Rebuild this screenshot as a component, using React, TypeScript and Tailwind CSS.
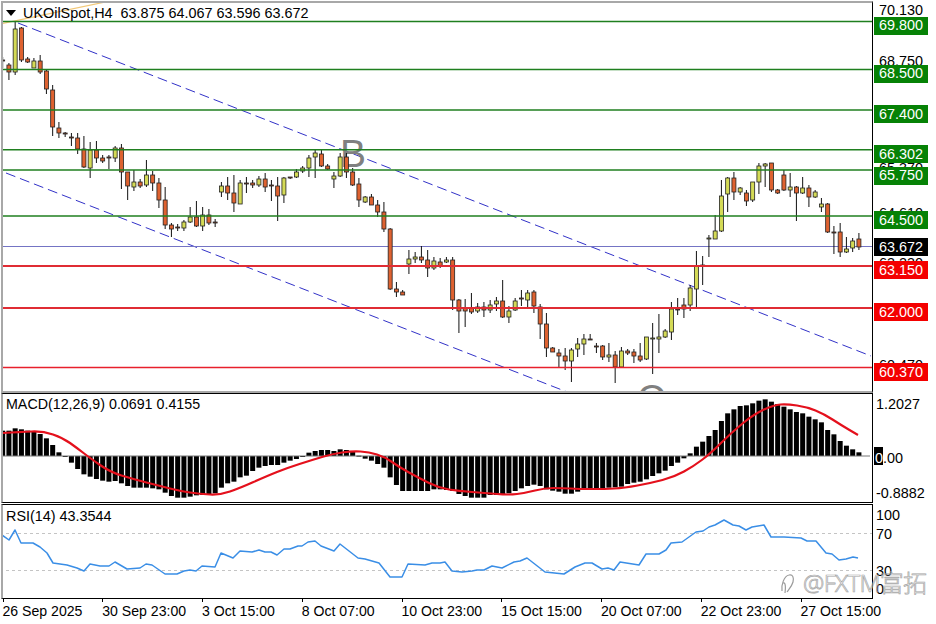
// MT4 style chart: UKOilSpot H4 with MACD and RSI panes
// all y values below are page pixels, read off the chart
type Candle = [number, number, number, number, number]; // high, low, bodyTop, bodyBottom, up

const CANDLES: Candle[] = [
  [57, 68, 60, 61, 0], [63, 80, 65, 72, 0], [22, 75, 29, 72, 1], [27, 62, 28, 60, 0], [57, 63, 59, 62, 0],
  [58, 68, 61, 68, 1], [55, 74, 61, 72, 0], [69, 94, 71, 89, 0], [85, 136, 90, 127, 0], [122, 138, 128, 133, 0],
  [132, 137, 133, 134, 0], [133, 146, 137, 138, 0], [133, 154, 138, 149, 0], [136, 168, 149, 167, 0], [142, 178, 150, 168, 1],
  [141, 163, 150, 158, 0], [155, 163, 158, 161, 0], [155, 169, 157, 158, 0], [146, 162, 148, 158, 1], [144, 189, 148, 172, 0],
  [172, 200, 172, 186, 0], [170, 191, 182, 187, 1], [179, 188, 182, 186, 0], [160, 187, 175, 185, 1], [171, 191, 175, 183, 0],
  [178, 208, 183, 200, 0], [187, 229, 200, 225, 0], [223, 237, 225, 229, 0], [224, 231, 227, 228, 0], [220, 231, 222, 228, 1],
  [207, 223, 217, 222, 1], [201, 227, 217, 226, 0], [207, 231, 215, 226, 1], [209, 225, 215, 223, 0], [219, 227, 222, 223, 0],
  [182, 197, 186, 192, 1], [177, 200, 186, 193, 0], [175, 212, 193, 203, 0], [180, 204, 183, 204, 1], [177, 193, 183, 184, 0],
  [180, 188, 183, 185, 0], [176, 187, 179, 185, 1], [173, 192, 179, 187, 0], [180, 201, 185, 186, 0], [177, 221, 186, 196, 0],
  [177, 203, 178, 195, 1], [177, 179, 177, 178, 0], [169, 178, 172, 177, 1], [166, 173, 168, 171, 1], [155, 177, 158, 168, 1],
  [150, 178, 153, 157, 1], [150, 167, 154, 166, 0], [164, 170, 166, 169, 0], [172, 188, 176, 179, 1], [153, 177, 157, 176, 1],
  [153, 178, 157, 172, 0], [168, 186, 172, 185, 0], [178, 207, 184, 200, 0], [196, 203, 197, 202, 1], [194, 205, 197, 205, 0],
  [200, 217, 205, 212, 0], [202, 232, 212, 229, 0], [228, 290, 229, 289, 0], [282, 297, 289, 292, 0], [290, 295, 292, 295, 0],
  [250, 274, 259, 264, 1], [252, 263, 257, 259, 1], [246, 263, 257, 260, 0], [250, 277, 260, 268, 0], [257, 270, 261, 268, 1],
  [258, 268, 262, 266, 0], [257, 263, 260, 262, 1], [257, 310, 260, 300, 0], [299, 333, 300, 311, 0], [299, 327, 308, 311, 0],
  [293, 314, 308, 312, 0], [303, 313, 307, 311, 1], [302, 317, 307, 310, 0], [300, 313, 305, 310, 1], [297, 311, 301, 304, 1],
  [280, 318, 301, 317, 0], [306, 323, 311, 317, 1], [298, 311, 301, 310, 1], [290, 306, 298, 299, 0], [290, 307, 293, 300, 1],
  [290, 313, 292, 306, 0], [304, 339, 307, 324, 0], [313, 357, 324, 348, 0], [347, 352, 348, 352, 0], [349, 367, 353, 356, 0],
  [348, 370, 356, 361, 0], [348, 382, 350, 361, 1], [338, 357, 344, 349, 1], [334, 355, 339, 344, 1], [334, 340, 339, 340, 0],
  [343, 353, 346, 347, 0], [345, 360, 346, 357, 0], [343, 362, 355, 357, 1], [351, 383, 355, 367, 0], [347, 367, 351, 367, 1],
  [349, 355, 351, 353, 0], [349, 363, 352, 356, 0], [343, 362, 356, 360, 0], [337, 360, 337, 359, 1], [323, 374, 338, 339, 1],
  [314, 353, 337, 339, 1], [329, 338, 331, 337, 1], [302, 340, 309, 332, 1], [298, 315, 309, 310, 0], [298, 318, 305, 309, 0],
  [285, 311, 288, 305, 1], [251, 307, 266, 289, 1], [256, 285, 265, 266, 1], [235, 257, 238, 239, 1], [215, 239, 231, 239, 1],
  [180, 232, 196, 231, 1], [177, 212, 178, 194, 1], [172, 200, 178, 192, 0], [187, 195, 188, 192, 1], [190, 206, 193, 201, 0],
  [182, 202, 182, 200, 1], [163, 194, 166, 182, 1], [163, 187, 164, 166, 1], [163, 192, 163, 190, 0], [189, 194, 190, 193, 0],
  [170, 191, 175, 190, 0], [173, 197, 187, 190, 1], [186, 221, 187, 193, 0], [177, 194, 188, 193, 1], [185, 207, 188, 197, 0],
  [190, 198, 192, 197, 1], [198, 212, 204, 207, 1], [203, 233, 204, 232, 0], [226, 254, 232, 233, 0], [223, 257, 232, 252, 0],
  [237, 253, 249, 252, 1], [238, 252, 241, 248, 1], [233, 250, 239, 247, 0],
];

// tops of the MACD bars, measured on a 3x crop, zero is at 198
const MACD = [
  122, 122, 115, 118, 122, 125, 132, 145, 165, 187, 200, 218, 237, 253, 260, 267, 272, 275, 273, 280,
  288, 293, 293, 293, 295, 298, 308, 318, 323, 323, 320, 316, 315, 313, 310, 293, 280, 275, 262, 257,
  243, 233, 228, 225, 225, 218, 212, 207, 199, 188, 183, 180, 180, 183, 178, 180, 183, 197, 206, 212,
  222, 233, 262, 285, 303, 303, 303, 303, 303, 298, 298, 300, 303, 312, 318, 323, 323, 323, 315, 315,
  312, 310, 303, 295, 288, 284, 288, 298, 302, 305, 311, 311, 305, 300, 296, 295, 295, 293, 292, 290,
  282, 278, 275, 268, 258, 250, 242, 228, 218, 205, 190, 170, 155, 138, 120, 93, 70, 58, 48, 46,
  40, 32, 28, 35, 42, 50, 58, 66, 70, 80, 88, 97, 120, 133, 153, 167, 178, 187,
];

const SIGNAL_POINTS = [
  [3, 433], [20, 432], [43, 431], [63, 438], [77, 448], [90, 458], [110, 472], [133, 479], [160, 486], [180, 491],
  [200, 494], [220, 495], [240, 488], [267, 476], [287, 468], [312, 460], [332, 454], [352, 451], [369, 452], [385, 457],
  [399, 467], [419, 478], [439, 488], [459, 491], [485, 493], [509, 495], [525, 493], [545, 488], [562, 488], [579, 489],
  [605, 489], [624, 488], [651, 483], [674, 477], [694, 466], [711, 453], [731, 433], [754, 414], [774, 405], [787, 404],
  [807, 407], [824, 414], [841, 425], [858, 435],
];

const RSI_LINE =
  "2,535 9,540 15,530 21,543 33,543 40,547 47,553 53,563 67,565 77,568 84,571 90,564 100,566 109,566 115,562 127,569 140,568 146,564 " +
  "152,565 165,574 177,574 184,571 190,570 196,571 202,566 215,567 221,553 233,558 240,551 252,552 259,550 265,552 271,552 277,555 " +
  "284,549 290,549 298,546 302,546 308,542 315,541 321,546 334,551 340,544 358,558 365,559 379,563 390,577 402,577 408,564 425,565 " +
  "432,563 440,563 445,562 452,571 462,572 472,571 477,570 484,570 492,566 502,568 514,562 520,561 527,558 545,572 564,574 575,567 " +
  "585,563 592,563 602,569 608,568 614,570 620,562 639,565 646,554 659,554 666,550 671,543 682,542 696,532 703,531 709,527 715,525 " +
  "724,520 733,525 739,526 746,530 752,527 764,525 771,537 784,537 801,538 807,541 816,541 826,553 832,554 839,560 846,559 853,557 858,558";

const LINES = [
  { y: 21.5, color: "#1f7f1f", w: 1.6 },
  { y: 69.5, color: "#1f7f1f", w: 1.6 },
  { y: 110, color: "#1f7f1f", w: 1.6 },
  { y: 149.7, color: "#1f7f1f", w: 1.6 },
  { y: 170, color: "#1f7f1f", w: 1.6 },
  { y: 216, color: "#1f7f1f", w: 1.6 },
  { y: 266, color: "#e02c34", w: 2 },
  { y: 308, color: "#e02c34", w: 1.8 },
  { y: 367.5, color: "#e8202c", w: 1.5 },
];

// plain scale values, most of them end up behind the price tags
const SCALE = [
  { y: 10, text: "70.130" },
  { y: 61, text: "68.750" },
  { y: 168, text: "65.370" },
  { y: 213, text: "64.610" },
  { y: 263, text: "63.230" },
  { y: 365, text: "60.470" },
];

const TAGS = [
  { y: 25.5, text: "69.800", bg: "bg-[#068206]" },
  { y: 73.5, text: "68.500", bg: "bg-[#068206]" },
  { y: 114, text: "67.400", bg: "bg-[#068206]" },
  { y: 154, text: "66.302", bg: "bg-[#068206]" },
  { y: 175.5, text: "65.750", bg: "bg-[#068206]" },
  { y: 220, text: "64.500", bg: "bg-[#068206]" },
  { y: 247, text: "63.672", bg: "bg-black" },
  { y: 270, text: "63.150", bg: "bg-[#f40000]" },
  { y: 312, text: "62.000", bg: "bg-[#f40000]" },
  { y: 372, text: "60.370", bg: "bg-[#f40000]" },
];

const TIMES = [
  "26 Sep 2025", "30 Sep 23:00", "3 Oct 15:00", "8 Oct 07:00", "10 Oct 23:00",
  "15 Oct 15:00", "20 Oct 07:00", "22 Oct 23:00", "27 Oct 15:00",
];

function barX(i: number) {
  return 2.67 + i * 6.25;
}

// rounds the corners of the signal line
function smoothPath(points: number[][]) {
  let d = `M${points[0][0]} ${points[0][1]}`;
  for (let i = 1; i < points.length - 1; i++) {
    const mx = (points[i][0] + points[i + 1][0]) / 2;
    const my = (points[i][1] + points[i + 1][1]) / 2;
    d += ` Q${points[i][0]} ${points[i][1]} ${mx} ${my}`;
  }
  const last = points[points.length - 1];
  return `${d} L${last[0]} ${last[1]}`;
}

function PriceTag({ top, text, bg }: { top: number; text: string; bg: string }) {
  return (
    <div className={`absolute left-px flex h-[18px] w-[54px] items-center pl-[5px] text-white ${bg}`} style={{ top }}>
      {text}
    </div>
  );
}

function ScaleText({ top, text, left = "left-[6px]" }: { top: number; text: string; left?: string }) {
  return (
    <div className={`absolute flex h-[18px] items-center text-black ${left}`} style={{ top }}>
      {text}
    </div>
  );
}

export default function App() {
  return (
    <div className="relative flex h-[624px] w-[936px] flex-col overflow-hidden bg-white pl-px pt-px font-['Liberation_Sans',Arial,sans-serif] text-[14.4px] leading-none text-black">
      {/* main pane */}
      <div className="flex h-[392px] shrink-0">
        <div className="relative h-full w-[872px] shrink-0 border-y-2 border-l-2 border-r border-y-[#a8a8a8] border-l-[#a8a8a8] border-r-black">
          <svg width={869} height={388} viewBox="3 3 869 388" className="block">
            <line x1={0} y1={24} x2={110} y2={1} stroke="#f2c878" strokeWidth={1.2} />
            <line x1={18} y1={23} x2={871} y2={356} stroke="#3232c8" strokeWidth={1} strokeDasharray="10 5" />
            <line x1={6} y1={173} x2={580} y2={397} stroke="#3232c8" strokeWidth={1} strokeDasharray="10 5" />
            <line x1={0} y1={246.5} x2={872} y2={246.5} stroke="#7474c4" strokeWidth={1} />
            <text x={340} y={167} fontSize={39} fill="#808080" fontFamily="'Liberation Sans', sans-serif">
              B
            </text>
            <text x={637} y={412} fontSize={39} fill="#808080" fontFamily="'Liberation Sans', sans-serif">
              C
            </text>
            {CANDLES.map(([high, low, top, bottom, up], i) => (
              <g key={i}>
                <line x1={barX(i)} y1={high} x2={barX(i)} y2={low} stroke="#111" strokeWidth={1} />
                <rect
                  x={barX(i) - 2}
                  y={top}
                  width={4}
                  height={Math.max(bottom - top, 1)}
                  fill={up ? "#d4da56" : "#de6230"}
                  stroke="#222"
                  strokeWidth={0.8}
                />
              </g>
            ))}
            {LINES.map((l) => (
              <line key={l.y} x1={0} y1={l.y} x2={872} y2={l.y} stroke={l.color} strokeWidth={l.w} />
            ))}
          </svg>
          <div className="absolute left-[3px] top-[3px] flex items-center gap-[7px] whitespace-pre">
            <span className="h-0 w-0 border-x-[5px] border-t-[6px] border-x-transparent border-t-black" />
            <span>UKOilSpot,H4  63.875 64.067 63.596 63.672</span>
          </div>
        </div>
        <div className="relative h-full w-[63px] shrink-0">
          {SCALE.map((s) => (
            <ScaleText key={s.text} top={s.y - 10} text={s.text} />
          ))}
          {TAGS.map((t) => (
            <PriceTag key={t.text} top={t.y - 10} text={t.text} bg={t.bg} />
          ))}
        </div>
      </div>

      {/* MACD */}
      <div className="flex h-[110px] shrink-0">
        <div className="relative h-full w-[872px] shrink-0 border-y border-l-2 border-r border-y-black border-l-[#a8a8a8] border-r-black">
          <svg width={869} height={108} viewBox="3 394 869 108" className="block">
            {MACD.map((v, i) => {
              const y = 390 + v / 3;
              return <rect key={i} x={barX(i) - 2.5} y={Math.min(y, 456)} width={5} height={Math.max(Math.abs(y - 456), 1)} fill="#000" />;
            })}
            <line x1={0} y1={456} x2={870} y2={456} stroke="#777" strokeWidth={1} />
            <path d={smoothPath(SIGNAL_POINTS)} fill="none" stroke="#e4101c" strokeWidth={2.2} />
          </svg>
          <div className="absolute left-[3px] top-[3px] text-[14.25px]">MACD(12,26,9) 0.0691 0.4155</div>
        </div>
        <div className="relative h-full w-[63px] shrink-0">
          <ScaleText top={2} text="1.2027" left="left-[3px]" />
          <div className="absolute left-px top-[54px] h-[18px] w-[9px] bg-black" />
          <div className="absolute left-[2px] top-[56px] flex h-[18px] items-center">
            <span className="text-white">0</span>
            <span>.00</span>
          </div>
          <ScaleText top={91} text="-0.8882" left="left-[3px]" />
        </div>
      </div>

      {/* RSI */}
      <div className="mt-px flex h-[95px] shrink-0">
        <div className="relative h-full w-[872px] shrink-0 border-y border-l-2 border-r border-y-black border-l-[#a8a8a8] border-r-black">
          <svg width={869} height={93} viewBox="3 505 869 93" className="block">
            <line x1={0} y1={533.5} x2={872} y2={533.5} stroke="#c4c4c4" strokeWidth={1} strokeDasharray="3 3" />
            <line x1={0} y1={570.5} x2={872} y2={570.5} stroke="#c4c4c4" strokeWidth={1} strokeDasharray="3 3" />
            <polyline points={RSI_LINE} fill="none" stroke="#3a8ee6" strokeWidth={1.5} strokeLinejoin="round" />
          </svg>
          <div className="absolute left-[3px] top-[4px]">RSI(14) 43.3544</div>
        </div>
        <div className="relative h-full w-[63px] shrink-0">
          <ScaleText top={2} text="100" left="left-[3px]" />
          <ScaleText top={21} text="70" left="left-[3px]" />
          <ScaleText top={58} text="30" left="left-[3px]" />
          <ScaleText top={76} text="0" left="left-[3px]" />
        </div>
      </div>

      {/* time axis */}
      <div className="flex pl-[1.5px] text-[14.1px]">
        {TIMES.map((t) => (
          <div key={t} className="relative w-[99.75px] shrink-0 pt-[5px]">
            <span className="absolute left-0 top-0 h-[3px] w-px bg-black" />
            <span className="whitespace-nowrap">{t}</span>
          </div>
        ))}
      </div>

      {/* watermark */}
      <div className="absolute left-[780px] top-[570px] flex h-[26px] items-center gap-[8px] font-['Noto_Sans','Noto_Sans_CJK_SC',sans-serif] text-[24px] font-light text-transparent [-webkit-text-stroke:0.7px_#a4a4a4]">
        <svg width={15} height={21} viewBox="0 0 15 21" fill="none" stroke="#9a9a9a" strokeWidth={1.2}>
          <path d="M2 18 C1 12 4 3 9 2 C13 1 14 5 13 9 C12 13 9 16 7 19" />
          <path d="M3 10 C5 9 6 12 5 20" />
        </svg>
        <span className="tracking-[-0.7px]">@FXTM富拓</span>
      </div>
    </div>
  );
}
